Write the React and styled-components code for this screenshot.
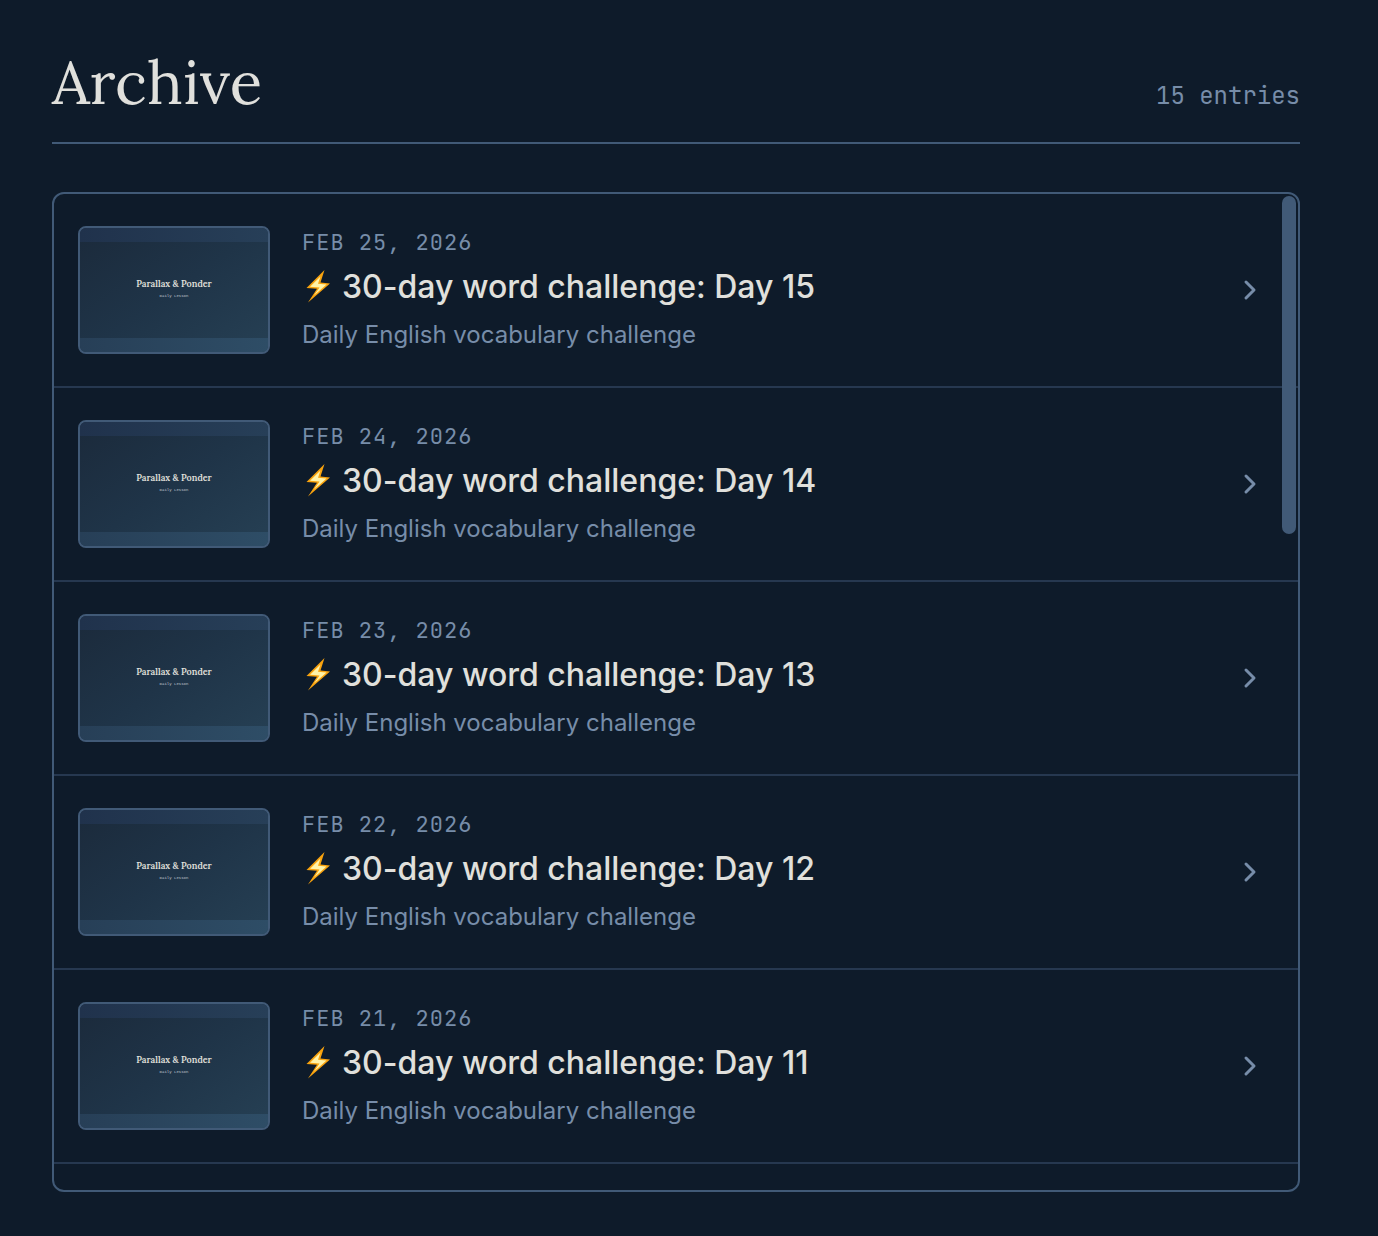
import React, { useEffect, useRef, useState } from "react"
import styled, { createGlobalStyle } from "styled-components"

const GlobalStyle = createGlobalStyle`
  * {
    box-sizing: border-box;
  }
  body {
    margin: 0;
    background: #0e1b2a;
    color: #e0e0dc;
    font-family: Inter, "Liberation Sans", sans-serif;
  }
`

const Page = styled.main`
  display: flex;
  flex-direction: column;
  height: 100vh;
  padding: 48px 78px 44px 52px;
`

const Header = styled.header`
  display: flex;
  justify-content: space-between;
  align-items: baseline;
  padding-bottom: 26px;
  margin-bottom: 48px;
  border-bottom: 2px solid #415a77;
`

const Title = styled.h1`
  margin: 0;
  font-family: Lora, "Liberation Serif", serif;
  font-size: 60px;
  font-weight: 400;
  line-height: 68px;
`

const Count = styled.span`
  color: #778da9;
  font-family: "JetBrains Mono", "DejaVu Sans Mono", monospace;
  font-size: 24px;
`

const Panel = styled.section`
  position: relative;
  display: flex;
  flex: 1;
  min-height: 0;
  overflow: hidden;
  border: 2px solid #415a77;
  border-radius: 12px;
`

const List = styled.ul`
  flex: 1;
  margin: 0;
  padding: 0;
  list-style: none;
  overflow-y: auto;
  scrollbar-width: none;
`

const ScrollThumb = styled.div`
  position: absolute;
  top: 2px;
  right: 2px;
  width: 14px;
  border-radius: 7px;
  background: #415a77;
  pointer-events: none;
`

const Row = styled.li`
  border-bottom: 2px solid #263850;
`

const EntryLink = styled.a`
  display: flex;
  align-items: center;
  gap: 32px;
  padding: 32px 36px 32px 24px;
  color: inherit;
  text-decoration: none;
`

const Thumb = styled.div`
  display: flex;
  flex-direction: column;
  justify-content: space-between;
  flex-shrink: 0;
  width: 192px;
  height: 128px;
  overflow: hidden;
  border: 2px solid #415a77;
  border-radius: 8px;
  background: linear-gradient(145deg, #1b2a3b, #1f3448 50%, #264054);
  text-align: center;
`

const ThumbBand = styled.div`
  height: 14px;
  background: ${({ $bottom }) =>
    $bottom
      ? "linear-gradient(90deg, #273f57, #2e4d66)"
      : "linear-gradient(90deg, #20324c, #273f58)"};
`

const ThumbTitle = styled.div`
  font-family: Lora, "Liberation Serif", serif;
  font-size: 9px;
  font-weight: 600;
  line-height: 12px;
`

const ThumbSub = styled.div`
  color: #c0c8d0;
  font-family: "Liberation Mono", monospace;
  font-size: 4px;
  line-height: 12px;
`

const Info = styled.div`
  flex: 1;
  min-width: 0;
`

const EntryDate = styled.time`
  display: block;
  color: #778da9;
  font-family: "JetBrains Mono", "DejaVu Sans Mono", monospace;
  font-size: 22px;
  line-height: 32px;
  letter-spacing: 1px;
  text-transform: uppercase;
`

const EntryTitle = styled.h2`
  display: flex;
  align-items: center;
  gap: 10px;
  margin: 8px 0 10px;
  font-size: 32px;
  font-weight: 500;
  line-height: 40px;
`

const EntryText = styled.p`
  margin: 0;
  color: #778da9;
  font-size: 24px;
  line-height: 36px;
`

const Bolt = () => (
  <svg width="30" height="34" viewBox="0 0 30 34" aria-hidden="true">
    <path d="M22.500 0 4.500 18l10.500.8L6 32.500 28 13.500l-9.500-1z" fill="#f9a30e" />
    <path d="M18.500 6.500 8 16.800l9.500.8-5.500 8L24.500 14.500l-8.500-.8z" fill="#fff3a8" />
  </svg>
)

const Chevron = () => (
  <svg width="26" height="26" viewBox="0 0 26 26" fill="none" aria-hidden="true">
    <path
      d="m10 5 8 8-8 8"
      stroke="#778da9"
      strokeWidth="3"
      strokeLinecap="round"
      strokeLinejoin="round"
    />
  </svg>
)

const entries = Array.from({ length: 15 }, (_, i) => ({
  day: 15 - i,
  date: `Feb ${25 - i}, 2026`,
}))

const Entry = ({ day, date }) => (
  <Row>
    <EntryLink href={`#day-${day}`}>
      <Thumb>
        <ThumbBand />
        <div>
          <ThumbTitle>Parallax &amp; Ponder</ThumbTitle>
          <ThumbSub>Daily Lesson</ThumbSub>
        </div>
        <ThumbBand $bottom />
      </Thumb>
      <Info>
        <EntryDate>{date}</EntryDate>
        <EntryTitle>
          <Bolt />
          30-day word challenge: Day {day}
        </EntryTitle>
        <EntryText>Daily English vocabulary challenge</EntryText>
      </Info>
      <Chevron />
    </EntryLink>
  </Row>
)

export default function App() {
  const listRef = useRef(null)
  const [thumb, setThumb] = useState({ height: 0, top: 0 })

  const updateThumb = () => {
    const { clientHeight, scrollHeight, scrollTop } = listRef.current
    const track = clientHeight - 4
    const ratio = track / scrollHeight
    setThumb({ height: track * ratio, top: scrollTop * ratio })
  }

  useEffect(() => {
    updateThumb()
    window.addEventListener("resize", updateThumb)
    return () => window.removeEventListener("resize", updateThumb)
  }, [])

  return (
    <>
      <GlobalStyle />
      <Page>
        <Header>
          <Title>Archive</Title>
          <Count>{entries.length} entries</Count>
        </Header>
        <Panel>
          <List ref={listRef} onScroll={updateThumb}>
            {entries.map(entry => (
              <Entry key={entry.day} {...entry} />
            ))}
          </List>
          <ScrollThumb
            style={{
              height: thumb.height,
              transform: `translateY(${thumb.top}px)`,
            }}
          />
        </Panel>
      </Page>
    </>
  )
}
